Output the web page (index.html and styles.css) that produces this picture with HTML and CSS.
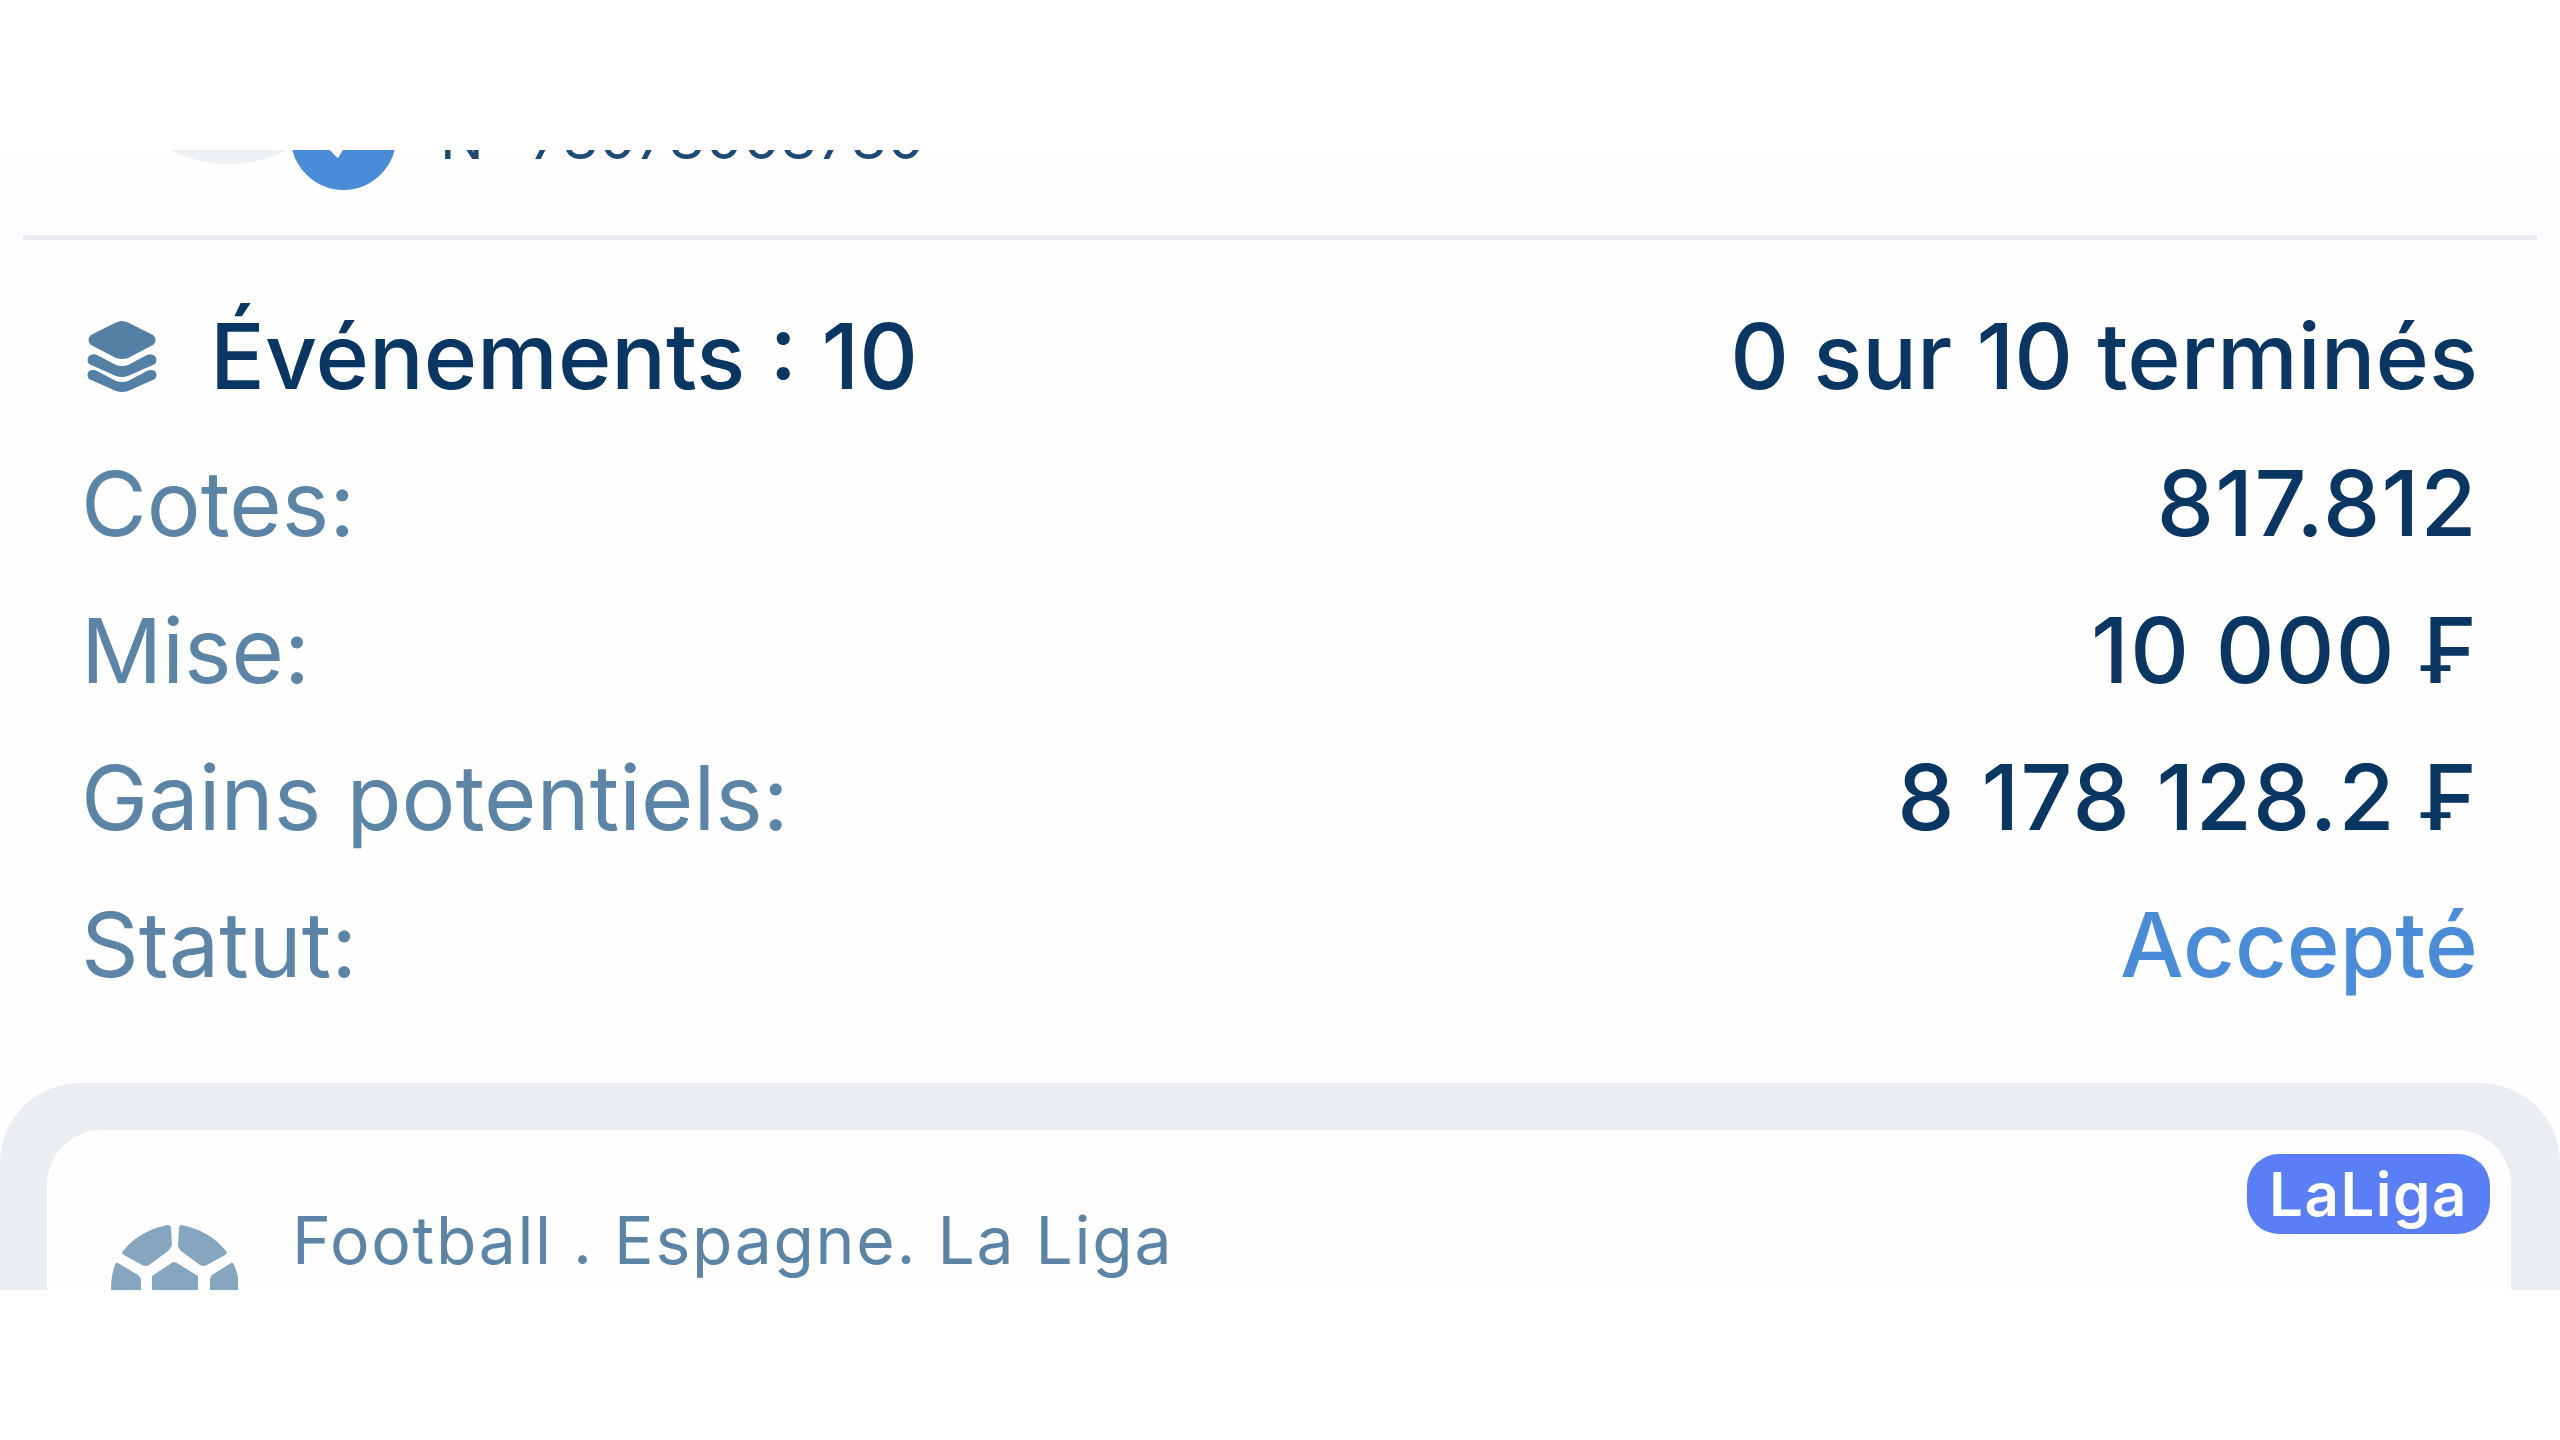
FILE: index.html
```html
<!DOCTYPE html>
<html lang="fr">
<head>
<meta charset="utf-8">
<title>Coupon</title>
<link rel="stylesheet" href="styles.css">
</head>
<body>
<main class="view">
  <header class="ticket-head">
    <div class="avatar"></div>
    <div class="check">
      <svg viewBox="0 0 105 105" class="check-icon"><path d="M26 46 L46 66 L70 26" fill="none" stroke="#fff" stroke-width="9"/></svg>
    </div>
    <div class="ticket-no">N° 78078008780</div>
  </header>
  <hr class="divider">
  <section class="summary">
    <div class="row">
      <div class="title">
        <svg class="layers" viewBox="0 0 72 72">
          <path d="M36 0 Q39 0 42 1.500 L67 14 Q72 19 67 24 L42 37 Q36 39 30 37 L5 24 Q0 19 5 14 L30 1.500 Q33 0 36 0Z" fill="#5580a6"/>
          <path d="M3 35 Q7 32 11 34 L30 44 Q36 46 42 44 L61 34 Q65 32 69 35 Q72 39 69 43 L42 55 Q36 57 30 55 L3 43 Q0 39 3 35Z" fill="#5580a6"/>
          <path d="M3 50 Q7 48 11 50 L30 60 Q36 62 42 60 L61 50 Q65 48 69 50 Q72 54 69 58 L42 70 Q36 72 30 70 L3 58 Q0 54 3 50Z" fill="#5580a6"/>
        </svg>
        <span>Événements : 10</span>
      </div>
      <span class="value">0 sur 10 terminés</span>
    </div>
    <div class="row"><span class="label">Cotes:</span><span class="value num">817.812</span></div>
    <div class="row"><span class="label">Mise:</span><span class="value num">10 000 ₣</span></div>
    <div class="row"><span class="label">Gains potentiels:</span><span class="value num">8 178 128.2 ₣</span></div>
    <div class="row"><span class="label">Statut:</span><span class="status">Accepté</span></div>
  </section>
  <section class="events">
    <article class="event">
      <span class="badge">LaLiga</span>
      <div class="event-head">
        <svg class="ball" viewBox="0 0 127 65">
          <path d="M12 26 Q28 6 56 0 Q60 0 60 3 L61 20 Q60 23 57 26 L38 40 Q35 42 31 40 L13 30 Q10 28 12 26Z" fill="#86a6c0"/>
          <path d="M71 0 Q99 6 115 26 Q117 28 114 30 L96 40 Q92 42 89 40 L70 26 Q67 23 67 20 L68 3 Q68 0 71 0Z" fill="#86a6c0"/>
          <path d="M7 38 L27 50 Q30 52 30 56 L30 65 L0 65 Q0 50 4 40 Q5 37 7 38Z" fill="#86a6c0"/>
          <path d="M62 37 Q64 37 66 38 L87 51 L87 65 L41 65 L41 51 Z" fill="#86a6c0"/>
          <path d="M120 38 L101 50 Q99 52 99 56 L99 65 L128 65 Q128 50 123 40 Q122 37 120 38Z" fill="#86a6c0"/>
        </svg>
        <span class="league">Football . Espagne. La Liga</span>
      </div>
    </article>
  </section>
</main>
</body>
</html>
```

FILE: styles.css
```css
* { box-sizing: border-box; }
html, body { margin: 0; padding: 0; background: #fff; }
body {
  width: 2560px;
  height: 1440px;
  padding-top: 150px;
  font-family: Inter, "Noto Sans", "Liberation Sans", sans-serif;
  overflow: hidden;
}
.view {
  height: 1140px;
  overflow: hidden;
  background: #fefefe;
}
.ticket-head {
  height: 285px;
  margin-top: -200px;
  padding-left: 98px;
  display: flex;
  align-items: flex-end;
}
.avatar {
  width: 262px;
  height: 262px;
  border-radius: 50%;
  background: #edf0f4;
  margin-bottom: 71px;
  flex: none;
}
.check {
  width: 115px;
  height: 115px;
  border-radius: 50%;
  background: #4a8cd8;
  border: 5px solid #fefefe;
  margin-left: -74px;
  margin-bottom: 40px;
  flex: none;
}
.check-icon { display: block; width: 100%; height: 100%; }
.ticket-no {
  margin-left: 39px;
  margin-bottom: 62px;
  font-size: 58px;
  line-height: 70px;
  letter-spacing: 1px;
  color: #1d4a77;
}
.divider {
  margin: 0 23px;
  border: 0;
  height: 5px;
  background: #e8eaf3;
}
.summary { padding: 43px 82px 0 81px; }
.row {
  height: 147px;
  display: flex;
  align-items: center;
  justify-content: space-between;
  font-size: 91px;
  line-height: 147px;
}
.title {
  display: flex;
  align-items: center;
  gap: 52px;
  font-weight: 500;
  color: #0a3663;
}
.layers { width: 72px; height: 72px; flex: none; margin-left: 5px; }
.label { color: #5b84a6; font-size: 90px; }
.value { color: #0a3663; font-weight: 500; }
.num { letter-spacing: 1.300px; }
.status { color: #4a8cd8; font-size: 90px; font-weight: 500; }
.events {
  margin-top: 65px;
  height: 207px;
  padding: 47px 49px 0 47px;
  background: #eaeef2;
  border-radius: 80px 80px 0 0;
}
.event {
  height: 160px;
  background: #fefefe;
  border-radius: 55px 55px 0 0;
  padding: 95px 0 0 64px;
  position: relative;
}
.event-head {
  display: flex;
  align-items: flex-start;
  gap: 54px;
}
.ball { width: 127px; height: 65px; flex: none; }
.league {
  margin-top: -25px;
  font-size: 66px;
  line-height: 80px;
  letter-spacing: 1.700px;
  color: #5b84a6;
}
.badge {
  position: absolute;
  top: 24px;
  right: 21px;
  width: 243px;
  height: 80px;
  border-radius: 32px;
  background: #5a7ef5;
  color: #fff;
  font-size: 60px;
  font-weight: 600;
  line-height: 80px;
  letter-spacing: 1.500px;
  text-align: center;
}
```
